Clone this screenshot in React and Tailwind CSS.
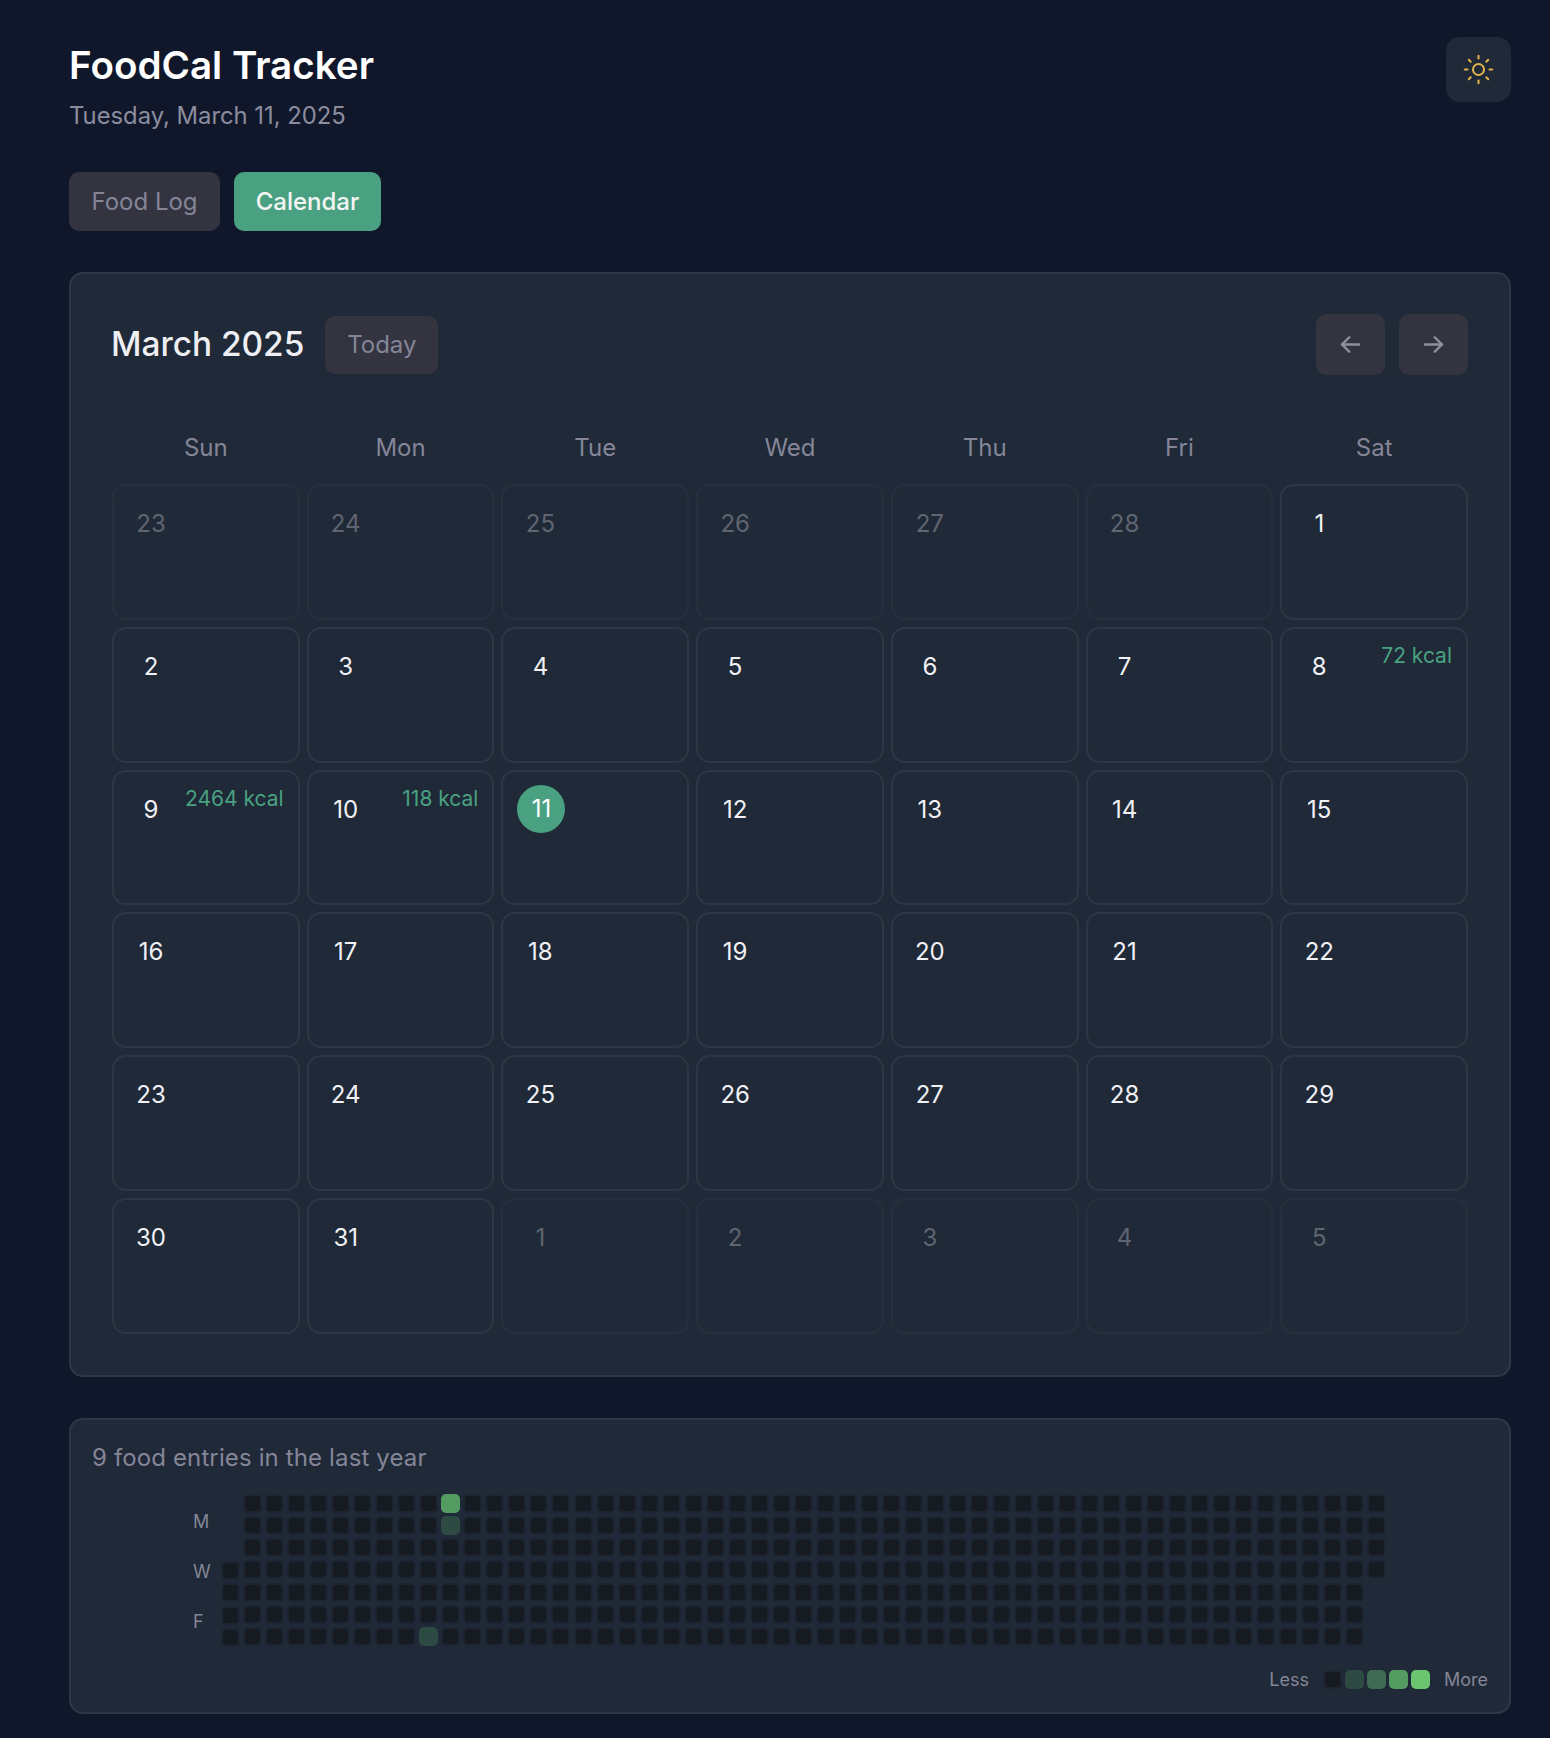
import React from 'react';
import { Sun } from 'lucide-react';
import { TbArrowLeft, TbArrowRight } from 'react-icons/tb';

const dayNames = ['Sun', 'Mon', 'Tue', 'Wed', 'Thu', 'Fri', 'Sat'];

const days = [
  ...[23, 24, 25, 26, 27, 28].map(d => ({ d, muted: true })),
  ...Array.from({ length: 31 }, (_, i) => ({ d: i + 1 })),
  ...[1, 2, 3, 4, 5].map(d => ({ d, muted: true })),
];

const kcal = { 8: '72 kcal', 9: '2464 kcal', 10: '118 kcal' };

const weeks = Array.from({ length: 53 }, (_, i) => i);

function cellColor(week, row) {
  if (week === 10 && row === 0) return 'bg-[#549c62] border-[#549c62]';
  if (week === 10 && row === 1) return 'bg-[#2d4a43] border-[#2d4a43]';
  if (week === 9 && row === 6) return 'bg-[#2d4a43] border-[#2d4a43]';
  return 'bg-[#161b22] border-[#1d2533]';
}

function DayCell({ d, muted, today }) {
  const label = !muted && kcal[d];
  return (
    <div className={`relative h-[135.8px] rounded-[14px] border-2 ${muted ? 'border-[#262f3e]' : 'border-[#2d3645]'}`}>
      <div className={`mt-[13px] ml-[14px] w-[48px] h-[48px] rounded-full flex items-center justify-center text-[24px] ${today ? 'bg-[#4aa181] text-white' : muted ? 'pr-[2px] pt-[2px] text-[#5f6471]' : 'pr-[2px] pt-[2px] text-[#f1f1f5]'}`}>
        {d}
      </div>
      {label && <span className="absolute top-[11px] right-[14px] text-[21px] text-[#4aa181]">{label}</span>}
    </div>
  );
}

export default function App() {
  return (
    <div className="min-h-[1738px] bg-[#10172a] pl-[69px] pr-[39px] pt-[37px] font-['Inter',sans-serif]">
      <div className="flex justify-between items-start">
        <div>
          <h1 className="text-[38.6px] leading-[56px] font-semibold text-white">FoodCal Tracker</h1>
          <p className="mt-[7px] text-[23.8px] leading-[32px] text-[#8b8d9f]">Tuesday, March 11, 2025</p>
        </div>
        <button className="w-[65px] h-[65px] rounded-[14px] bg-[#1f2937] flex items-center justify-center">
          <Sun size={33} strokeWidth={1.5} className="text-[#e0b24d]" />
        </button>
      </div>

      <div className="flex gap-[14px] mt-[40px]">
        <button className="h-[59px] w-[151px] rounded-[10px] bg-[#343440] text-[24px] text-[#858598]">Food Log</button>
        <button className="h-[59px] w-[147px] rounded-[10px] bg-[#4aa181] text-[24px] font-medium text-[#f5f5f5]">Calendar</button>
      </div>

      <section className="mt-[41px] rounded-[14px] border-2 border-[#2d3748] bg-[#1f2937] pt-[40px] px-[41px] pb-[41px]">
        <div className="flex items-center justify-between">
          <div className="flex items-center gap-[21px] -ml-[1px]">
            <h2 className="text-[33.4px] font-medium text-[#eeeef3]">March 2025</h2>
            <button className="h-[58px] w-[113px] rounded-[10px] bg-[#343440] text-[24px] text-[#858598]">Today</button>
          </div>
          <div className="flex gap-[14px]">
            <button className="w-[69px] h-[61px] rounded-[10px] bg-[#343440] flex items-center justify-center text-[#8e8e9c]"><TbArrowLeft size={29} /></button>
            <button className="w-[69px] h-[61px] rounded-[10px] bg-[#343440] flex items-center justify-center text-[#8e8e9c]"><TbArrowRight size={29} /></button>
          </div>
        </div>

        <div className="grid grid-cols-7 gap-x-[7px] mt-[57px] mb-[20px]">
          {dayNames.map(n => <div key={n} className="text-center text-[24px] leading-[32px] text-[#858598]">{n}</div>)}
        </div>

        <div className="grid grid-cols-7 gap-x-[7px] gap-y-[7px]">
          {days.map((c, i) => <DayCell key={i} {...c} today={!c.muted && c.d === 11} />)}
        </div>
      </section>

      <section className="mt-[41px] h-[296px] rounded-[14px] border-2 border-[#2d3748] bg-[#1f2937] pt-[22px] px-[21px]">
        <p className="text-[24px] leading-[32px] tracking-[0.13px] text-[#858598]">9 food entries in the last year</p>
        <div className="flex mt-[20px] ml-[99px]">
          <div className="w-[30px] h-[153px] relative text-[18px] text-[#858598]">
            <span className="absolute top-[14px] left-[2px]">M</span>
            <span className="absolute top-[64px] left-[2px]">W</span>
            <span className="absolute top-[114px] left-[2px]">F</span>
          </div>
          <div className="flex gap-[3.04px]">
            {weeks.map(w => (
              <div key={w} className={`flex flex-col gap-[3.2px] ${w === 0 ? 'justify-end' : ''}`}>
                {Array.from({ length: 7 }, (_, r) => r).filter(r => !(w === 0 && r < 3) && !(w === 52 && r > 3)).map(r => (
                  <div key={r} className={`w-[19px] h-[19px] rounded-[5px] border-2 ${cellColor(w, r)}`} />
                ))}
              </div>
            ))}
          </div>
        </div>
        <div className="flex justify-end items-center mt-[19px] text-[18px] text-[#858598]">
          <span className="mr-[14px]">Less</span>
          <div className="flex gap-[3px]">
            <div className="w-[19px] h-[19px] rounded-[5px] border-2 bg-[#161b22] border-[#1d2533]" />
            <div className="w-[19px] h-[19px] rounded-[5px] bg-[#2d4a43]" />
            <div className="w-[19px] h-[19px] rounded-[5px] bg-[#3f6a54]" />
            <div className="w-[19px] h-[19px] rounded-[5px] bg-[#549c62]" />
            <div className="w-[19px] h-[19px] rounded-[5px] bg-[#6bc46f]" />
          </div>
          <span className="ml-[14px]">More</span>
        </div>
      </section>
    </div>
  );
}
